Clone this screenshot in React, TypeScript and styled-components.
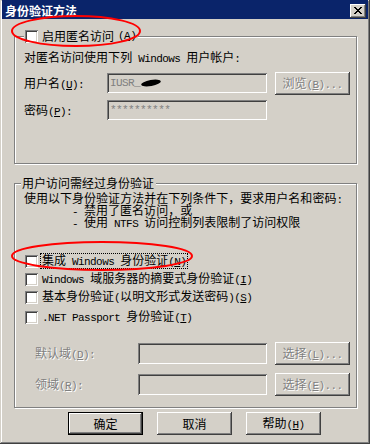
import React from "react";
import styled, { createGlobalStyle, css } from "styled-components";

const GlobalStyle = createGlobalStyle`
  html, body {
    margin: 0;
    padding: 0;
    background: #d4d0c8;
  }
  body {
    font-family: "Noto Sans CJK SC", "Liberation Sans", sans-serif;
    font-size: 12px;
    color: #000;
  }
`;

const raised = css`
  background: #d4d0c8;
  box-shadow: inset -1px -1px #404040, inset 1px 1px #ffffff,
    inset -2px -2px #808080, inset 2px 2px #d4d0c8;
`;

const sunken = css`
  box-shadow: inset 1px 1px #808080, inset -1px -1px #ffffff,
    inset 2px 2px #404040, inset -2px -2px #d4d0c8;
`;

const Window = styled.div`
  position: relative;
  width: 370px;
  height: 444px;
  box-sizing: border-box;
  padding: 0 2px 2px 2px;
  background: #d4d0c8;
  box-shadow: inset -1px -1px #404040, inset 1px 1px #d4d0c8,
    inset -2px -2px #808080, inset 2px 2px #ffffff;
  display: flex;
  flex-direction: column;
`;

const TitleBar = styled.div`
  height: 19px;
  box-sizing: border-box;
  padding: 2px 2px 0 3px;
  background: #0a246a;
  display: flex;
  align-items: center;
  justify-content: space-between;
`;

const Title = styled.span`
  color: #fff;
  font-weight: bold;
  font-size: 12px;
  line-height: 14px;
`;

const CloseButton = styled.div`
  ${raised};
  width: 16px;
  height: 14px;
  display: flex;
  align-items: center;
  justify-content: center;
`;

const Body = styled.div`
  padding: 0 11px 0 12px;
  display: flex;
  flex-direction: column;
`;

const GroupBox = styled.fieldset<{ $top: number; $pt: number; $pb: number }>`
  margin: ${(p) => p.$top}px 0 0 0;
  min-width: 0;
  border: 1px solid #808080;
  box-shadow: inset 1px 1px #ffffff, 1px 1px #ffffff;
  padding: ${(p) => p.$pt}px 0 ${(p) => p.$pb}px 9px;
`;

const Legend = styled.legend<{ $ml: number }>`
  background: #d4d0c8;
  padding: 0 2px 0 1px;
  margin-left: ${(p) => p.$ml}px;
  line-height: 14px;
  height: 14px;
`;

const LegendInner = styled.span`
  display: inline-flex;
  align-items: center;
  gap: 4px;
  height: 14px;
`;

const Line = styled.div<{ $indent?: number; $lh?: number }>`
  line-height: ${(p) => p.$lh ?? 14}px;
  height: ${(p) => p.$lh ?? 14}px;
  padding-left: ${(p) => p.$indent ?? 0}px;
  white-space: nowrap;
`;

const Description = styled.div`
  display: flex;
  flex-direction: column;
`;

const FormRow = styled.div<{ $mt: number; $indent?: number }>`
  display: flex;
  align-items: flex-start;
  height: 23px;
  margin-top: ${(p) => p.$mt}px;
  padding-left: ${(p) => p.$indent ?? 0}px;
`;

const FieldLabel = styled.div<{ $w: number; $disabled?: boolean }>`
  width: ${(p) => p.$w}px;
  height: 23px;
  line-height: 22px;
  flex: none;
  white-space: nowrap;
  ${(p) =>
    p.$disabled &&
    css`
      color: #808080;
      text-shadow: 1px 1px 0 #ffffff;
    `}
`;

const Field = styled.div<{ $w: number; $h: number }>`
  ${sunken};
  width: ${(p) => p.$w}px;
  height: ${(p) => p.$h}px;
  margin-top: 1px;
  box-sizing: border-box;
  background: #d4d0c8;
  padding: 0 3px;
  display: flex;
  align-items: center;
  color: #808080;
  flex: none;
`;

const Redaction = styled.span`
  display: inline-block;
  width: 20px;
  height: 6px;
  margin-left: 1px;
  background: #000;
  border-radius: 50%;
  transform: rotate(-10deg);
`;

const Button = styled.button<{ $default?: boolean }>`
  ${raised};
  width: 75px;
  height: 23px;
  box-sizing: border-box;
  margin: 0;
  padding: 0;
  border: none;
  flex: none;
  font-family: "Noto Sans CJK SC", "Liberation Sans", sans-serif;
  font-size: 12px;
  line-height: 14px;
  color: #000;
  ${(p) =>
    p.$default &&
    css`
      border: 1px solid #000;
    `}
  &:disabled {
    color: #808080;
    text-shadow: 1px 1px 0 #ffffff;
  }
`;

const FieldGap = styled.div`
  width: 8px;
  flex: none;
`;

const CheckList = styled.div`
  display: flex;
  flex-direction: column;
  margin-top: 24px;
`;

const CheckRow = styled.div<{ $mt?: number }>`
  display: flex;
  align-items: center;
  gap: 2px;
  height: 18px;
  margin-top: ${(p) => p.$mt ?? 0}px;
  padding-left: 1px;
`;

const CheckBox = styled.span`
  ${sunken};
  width: 13px;
  height: 13px;
  background: #ffffff;
  flex: none;
`;

const CheckLabel = styled.span<{ $focused?: boolean }>`
  border: 1px ${(p) => (p.$focused ? "dotted #000" : "solid transparent")};
  padding: 0 1px;
  line-height: 12px;
  white-space: nowrap;
`;

const ButtonBar = styled.div`
  display: flex;
  gap: 14px;
  margin-top: 4px;
  padding-left: 66px;
`;

const Annotations = styled.svg`
  position: absolute;
  left: 0;
  top: 0;
  pointer-events: none;
`;

const Latin = styled.span`
  font-family: "Liberation Mono", monospace;
  font-size: 11px;
  letter-spacing: -0.6px;
  white-space: pre;
`;

// "&X" underlines X; ASCII runs are set in a half-width mono face.
function Caption({ text }: { text: string }) {
  const tokens: { ch: string; u: boolean }[] = [];
  for (let i = 0; i < text.length; i++) {
    if (text[i] === "&" && i + 1 < text.length) {
      tokens.push({ ch: text[i + 1], u: true });
      i++;
    } else {
      tokens.push({ ch: text[i], u: false });
    }
  }
  const groups: { latin: boolean; items: { ch: string; u: boolean }[] }[] = [];
  for (const t of tokens) {
    const latin = t.ch.charCodeAt(0) < 128;
    const last = groups[groups.length - 1];
    if (last && last.latin === latin) last.items.push(t);
    else groups.push({ latin, items: [t] });
  }
  return (
    <>
      {groups.map((g, gi) => {
        const content = g.items.map((t, i) =>
          t.u ? <u key={i}>{t.ch}</u> : <React.Fragment key={i}>{t.ch}</React.Fragment>
        );
        return g.latin ? (
          <Latin key={gi}>{content}</Latin>
        ) : (
          <React.Fragment key={gi}>{content}</React.Fragment>
        );
      })}
    </>
  );
}

function CloseGlyph() {
  const rows = [
    "XX....XX",
    ".XX..XX.",
    "..XXXX..",
    "...XX...",
    "..XXXX..",
    ".XX..XX.",
    "XX....XX",
  ];
  return (
    <svg width="8" height="7" shapeRendering="crispEdges">
      {rows.flatMap((r, y) =>
        r.split("").map((c, x) =>
          c === "X" ? <rect key={`${x}-${y}`} x={x} y={y} width="1" height="1" fill="#000" /> : null
        )
      )}
    </svg>
  );
}

const authOptions = [
  { text: "集成 Windows 身份验证(&N)", focused: true, mt: 0 },
  { text: "Windows 域服务器的摘要式身份验证(&I)", focused: false, mt: 0 },
  { text: "基本身份验证(以明文形式发送密码)(&S)", focused: false, mt: 0 },
  { text: ".NET Passport 身份验证(&T)", focused: false, mt: 2 },
];

export default function App() {
  return (
    <>
      <GlobalStyle />
      <Window>
        <TitleBar>
          <Title>身份验证方法</Title>
          <CloseButton>
            <CloseGlyph />
          </CloseButton>
        </TitleBar>

        <Body>
          <GroupBox $top={10} $pt={7} $pb={41}>
            <Legend $ml={0}>
              <LegendInner>
                <CheckBox />
                <Caption text="启用匿名访问(&A)" />
              </LegendInner>
            </Legend>
            <Line>
              <Caption text="对匿名访问使用下列 Windows 用户帐户:" />
            </Line>
            <FormRow $mt={8}>
              <FieldLabel $w={83}>
                <Caption text="用户名(&U):" />
              </FieldLabel>
              <Field $w={160} $h={20}>
                <Caption text="IUSR_" />
                <Redaction />
              </Field>
              <FieldGap />
              <Button disabled>
                <Caption text="浏览(&B)..." />
              </Button>
            </FormRow>
            <FormRow $mt={4}>
              <FieldLabel $w={83}>
                <Caption text="密码(&P):" />
              </FieldLabel>
              <Field $w={160} $h={20}>
                <Caption text="**********" />
              </Field>
            </FormRow>
          </GroupBox>

          <GroupBox $top={12} $pt={2} $pb={11}>
            <Legend $ml={-3}>用户访问需经过身份验证</Legend>
            <Description>
              <Line $lh={12}>
                <Caption text="使用以下身份验证方法并在下列条件下，要求用户名和密码:" />
              </Line>
              <Line $lh={12} $indent={48}>
                <Caption text="- 禁用了匿名访问，或" />
              </Line>
              <Line $lh={12} $indent={48}>
                <Caption text="- 使用 NTFS 访问控制列表限制了访问权限" />
              </Line>
            </Description>

            <CheckList>
              {authOptions.map((o) => (
                <CheckRow key={o.text} $mt={o.mt}>
                  <CheckBox />
                  <CheckLabel $focused={o.focused}>
                    <Caption text={o.text} />
                  </CheckLabel>
                </CheckRow>
              ))}
            </CheckList>

            <FormRow $mt={16} $indent={11}>
              <FieldLabel $w={103} $disabled>
                <Caption text="默认域(&D):" />
              </FieldLabel>
              <Field $w={129} $h={21} />
              <FieldGap />
              <Button disabled>
                <Caption text="选择(&L)..." />
              </Button>
            </FormRow>
            <FormRow $mt={8} $indent={11}>
              <FieldLabel $w={103} $disabled>
                <Caption text="领域(&R):" />
              </FieldLabel>
              <Field $w={129} $h={21} />
              <FieldGap />
              <Button disabled>
                <Caption text="选择(&E)..." />
              </Button>
            </FormRow>
          </GroupBox>
        </Body>

        <ButtonBar>
          <Button $default>确定</Button>
          <Button>取消</Button>
          <Button>
            <Caption text="帮助(&H)" />
          </Button>
        </ButtonBar>

        <Annotations width="370" height="444">
          <ellipse cx="76" cy="31" rx="64" ry="15" fill="none" stroke="#ff0000" strokeWidth="2" />
          <ellipse cx="102" cy="256" rx="90" ry="14" fill="none" stroke="#ff0000" strokeWidth="2" />
        </Annotations>
      </Window>
    </>
  );
}
